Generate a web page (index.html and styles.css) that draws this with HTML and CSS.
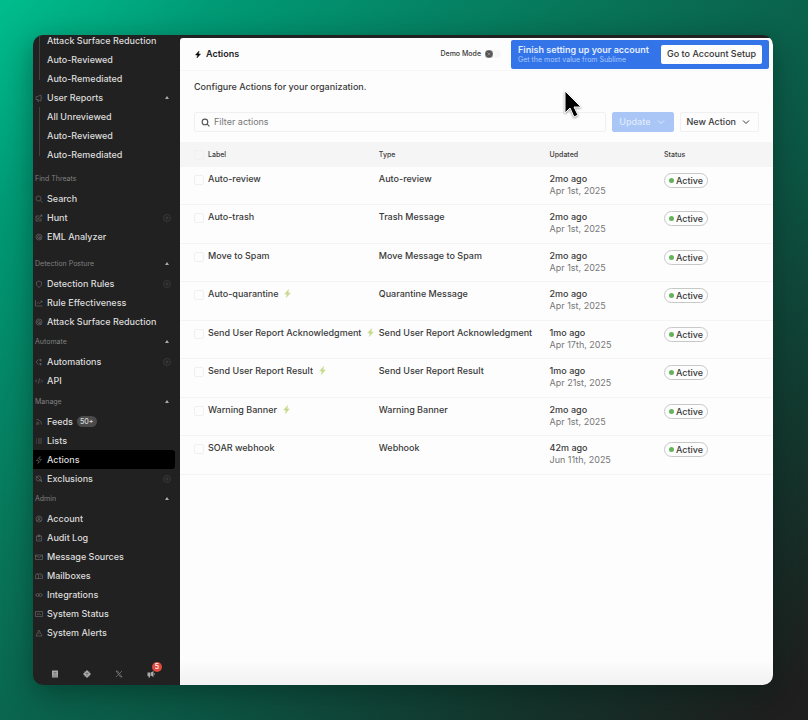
FILE: index.html
```
<!DOCTYPE html>
<html lang="en">
<head>
<meta charset="utf-8">
<title>Actions</title>
<link rel="stylesheet" href="styles.css">
</head>
<body>
<svg class="defs" width="0" height="0" aria-hidden="true">
  <symbol id="i-horn" viewBox="0 0 16 16"><path d="M2 6v5h3l7 3V2L5 5H3a1 1 0 0 0-1 1zM5 11l1 4h2M14 7v2"/></symbol>
  <symbol id="i-search" viewBox="0 0 16 16"><circle cx="7" cy="7" r="5"/><path d="M11 11l4 4"/></symbol>
  <symbol id="i-hunt" viewBox="0 0 16 16"><path d="M2 4h7M2 4v10h10V8M5 11l9-9M10 2h4v4M4 7l5 5"/></symbol>
  <symbol id="i-target" viewBox="0 0 16 16"><circle cx="8" cy="8" r="6"/><circle cx="8" cy="8" r="3"/><path d="M8 8l4 5M8 8h.1"/></symbol>
  <symbol id="i-shield" viewBox="0 0 16 16"><path d="M8 2l5 2v4c0 3-2 5-5 7-3-2-5-4-5-7V4z"/></symbol>
  <symbol id="i-chart" viewBox="0 0 16 16"><path d="M1 2v12h14M4 9l3-2 2 2 5-5M11 4h3v3"/></symbol>
  <symbol id="i-auto" viewBox="0 0 16 16"><path d="M7 3L2 8l5 5M11 2v5M8 4h6M11 10v5M8 12h6"/></symbol>
  <symbol id="i-code" viewBox="0 0 16 16"><path d="M4 5L1 8l3 3M12 5l3 3-3 3M9 3L7 13"/></symbol>
  <symbol id="i-feed" viewBox="0 0 16 16"><path d="M3 8a5 5 0 0 1 5 5M3 3a10 10 0 0 1 10 10"/><circle cx="4" cy="12" r="1"/></symbol>
  <symbol id="i-list" viewBox="0 0 16 16"><path d="M6 4h8M6 8h8M6 12h8M2 4h2M2 8h2M2 12h2"/></symbol>
  <symbol id="i-bolt" viewBox="0 0 16 16"><path d="M10 1L3 9h4l-1 6 7-8H9z"/></symbol>
  <symbol id="i-exclude" viewBox="0 0 16 16"><circle cx="7" cy="7" r="5"/><path d="M3 3l11 11M13 9v5"/></symbol>
  <symbol id="i-gear" viewBox="0 0 16 16"><circle cx="8" cy="8" r="6"/><circle cx="8" cy="7" r="2"/><path d="M4 12c2-3 6-3 8 0"/></symbol>
  <symbol id="i-log" viewBox="0 0 16 16"><path d="M3 4h10v10H3zM6 2h4v3H6zM6 9l2 2 3-3"/></symbol>
  <symbol id="i-mail" viewBox="0 0 16 16"><path d="M1 4h14v9H1zM1 5l7 4 7-4"/></symbol>
  <symbol id="i-box" viewBox="0 0 16 16"><path d="M4 4h8a3 3 0 0 1 3 3v6H1V7a3 3 0 0 1 3-3zM7 13V7a3 3 0 0 0-3-3M10 8h3"/></symbol>
  <symbol id="i-plug" viewBox="0 0 16 16"><circle cx="5" cy="8" r="3"/><circle cx="11" cy="8" r="3"/><path d="M1 8h1M14 8h1"/></symbol>
  <symbol id="i-status" viewBox="0 0 16 16"><path d="M1 3h14v10H1zM5 10V7M8 10V5M11 10V8"/></symbol>
  <symbol id="i-alert" viewBox="0 0 16 16"><path d="M8 2l6 12H2zM8 7v3M8 12h.1"/></symbol>
  <symbol id="i-add" viewBox="0 0 16 16"><circle cx="8" cy="8" r="7"/><path d="M8 4v8M4 8h8"/></symbol>
  <symbol id="i-chevron" viewBox="0 0 16 16"><path d="M2 5l6 6 6-6"/></symbol>
</svg>
<div class="window">
  <aside class="sidebar">
    <nav class="nav">
      <ul class="group tree">
        <li><a href="#">Attack Surface Reduction</a></li>
        <li><a href="#">Auto-Reviewed</a></li>
        <li><a href="#">Auto-Remediated</a></li>
      </ul>
      <ul class="group">
        <li><a href="#"><svg class="icon"><use href="#i-horn"/></svg>User Reports<span class="caret"></span></a></li>
      </ul>
      <ul class="group tree">
        <li><a href="#">All Unreviewed</a></li>
        <li><a href="#">Auto-Reviewed</a></li>
        <li><a href="#">Auto-Remediated</a></li>
      </ul>
      <h2 class="gap-m">Find Threats</h2>
      <ul class="group">
        <li><a href="#"><svg class="icon"><use href="#i-search"/></svg>Search</a></li>
        <li><a href="#"><svg class="icon"><use href="#i-hunt"/></svg>Hunt<svg class="icon add"><use href="#i-add"/></svg></a></li>
        <li><a href="#"><svg class="icon"><use href="#i-target"/></svg>EML Analyzer</a></li>
      </ul>
      <h2 class="gap-l">Detection Posture<span class="caret"></span></h2>
      <ul class="group">
        <li><a href="#"><svg class="icon"><use href="#i-shield"/></svg>Detection Rules<svg class="icon add"><use href="#i-add"/></svg></a></li>
        <li><a href="#"><svg class="icon"><use href="#i-chart"/></svg>Rule Effectiveness</a></li>
        <li><a href="#"><svg class="icon"><use href="#i-target"/></svg>Attack Surface Reduction</a></li>
      </ul>
      <h2>Automate<span class="caret"></span></h2>
      <ul class="group">
        <li><a href="#"><svg class="icon"><use href="#i-auto"/></svg>Automations<svg class="icon add"><use href="#i-add"/></svg></a></li>
        <li><a href="#"><svg class="icon"><use href="#i-code"/></svg>API</a></li>
      </ul>
      <h2 class="gap-s">Manage<span class="caret"></span></h2>
      <ul class="group">
        <li><a href="#"><svg class="icon"><use href="#i-feed"/></svg>Feeds<span class="count">50+</span></a></li>
        <li><a href="#"><svg class="icon"><use href="#i-list"/></svg>Lists</a></li>
        <li><a href="#" class="current" aria-current="page"><svg class="icon"><use href="#i-bolt"/></svg>Actions</a></li>
        <li><a href="#"><svg class="icon"><use href="#i-exclude"/></svg>Exclusions<svg class="icon add"><use href="#i-add"/></svg></a></li>
      </ul>
      <h2>Admin<span class="caret"></span></h2>
      <ul class="group">
        <li><a href="#"><svg class="icon"><use href="#i-gear"/></svg>Account</a></li>
        <li><a href="#"><svg class="icon"><use href="#i-log"/></svg>Audit Log</a></li>
        <li><a href="#"><svg class="icon"><use href="#i-mail"/></svg>Message Sources</a></li>
        <li><a href="#"><svg class="icon"><use href="#i-box"/></svg>Mailboxes</a></li>
        <li><a href="#"><svg class="icon"><use href="#i-plug"/></svg>Integrations</a></li>
        <li><a href="#"><svg class="icon"><use href="#i-status"/></svg>System Status</a></li>
        <li><a href="#"><svg class="icon"><use href="#i-alert"/></svg>System Alerts</a></li>
      </ul>
    </nav>
    <div class="social">
      <a href="#" aria-label="Docs"><svg viewBox="0 0 16 16"><path class="solid" d="M2 1h12v14H2z"/><path class="cut" d="M5 5h6M5 8h6M3 12h10"/></svg></a>
      <a href="#" aria-label="Slack"><svg viewBox="0 0 16 16"><path class="solid" d="M6 1h4v2h3v3h2v4h-2v3h-3v2H6v-2H3v-3H1V6h2V3h3z"/><path class="cut" d="M5 7h6M8 5v6"/></svg></a>
      <a href="#" aria-label="X"><svg viewBox="0 0 16 16"><path class="line" d="M2 2h3l9 12h-3zM14 2L9 7M7 9l-5 5"/></svg></a>
      <a href="#" aria-label="News"><svg viewBox="0 0 16 16"><path class="solid" d="M1 5h6v7H6v3H3v-3H1zM8 5l5-3v12l-5-3zM14 6h1v4h-1z"/></svg><span class="alert">5</span></a>
    </div>
  </aside>
  <main class="main">
    <header class="top">
      <h1><svg class="bolt"><use href="#i-bolt"/></svg>Actions</h1>
      <div class="demo">Demo Mode
        <button class="toggle" type="button" role="switch" aria-checked="false" aria-label="Demo Mode"><svg viewBox="0 0 16 16"><circle cx="8" cy="8" r="8"/><path d="M5 5l6 6M11 5l-6 6"/></svg></button>
      </div>
      <section class="banner">
        <div class="banner-text">
          <strong>Finish setting up your account</strong>
          <span>Get the most value from Sublime</span>
        </div>
        <button type="button">Go to Account Setup</button>
      </section>
    </header>
    <p class="intro">Configure Actions for your organization.</p>
    <div class="tools">
      <label class="filter">
        <svg><use href="#i-search"/></svg>
        <input type="text" placeholder="Filter actions" aria-label="Filter actions">
      </label>
      <button class="btn primary" type="button">Update<svg><use href="#i-chevron"/></svg></button>
      <button class="btn" type="button">New Action<svg><use href="#i-chevron"/></svg></button>
    </div>
    <table>
      <colgroup><col class="c-check"><col class="c-name"><col class="c-name"><col class="c-date"><col></colgroup>
      <thead>
        <tr><th><input type="checkbox" aria-label="Select all"></th><th>Label</th><th>Type</th><th>Updated</th><th>Status</th></tr>
      </thead>
      <tbody>
        <tr><td><input type="checkbox" aria-label="Select Auto-review"></td><td>Auto-review</td><td>Auto-review</td><td>2mo ago<small>Apr 1st, 2025</small></td><td><span class="pill">Active</span></td></tr>
        <tr><td><input type="checkbox" aria-label="Select Auto-trash"></td><td>Auto-trash</td><td>Trash Message</td><td>2mo ago<small>Apr 1st, 2025</small></td><td><span class="pill">Active</span></td></tr>
        <tr><td><input type="checkbox" aria-label="Select Move to Spam"></td><td>Move to Spam</td><td>Move Message to Spam</td><td>2mo ago<small>Apr 1st, 2025</small></td><td><span class="pill">Active</span></td></tr>
        <tr><td><input type="checkbox" aria-label="Select Auto-quarantine"></td><td>Auto-quarantine<svg class="flash"><use href="#i-bolt"/></svg></td><td>Quarantine Message</td><td>2mo ago<small>Apr 1st, 2025</small></td><td><span class="pill">Active</span></td></tr>
        <tr><td><input type="checkbox" aria-label="Select Send User Report Acknowledgment"></td><td>Send User Report Acknowledgment<svg class="flash"><use href="#i-bolt"/></svg></td><td>Send User Report Acknowledgment</td><td>1mo ago<small>Apr 17th, 2025</small></td><td><span class="pill">Active</span></td></tr>
        <tr><td><input type="checkbox" aria-label="Select Send User Report Result"></td><td>Send User Report Result<svg class="flash"><use href="#i-bolt"/></svg></td><td>Send User Report Result</td><td>1mo ago<small>Apr 21st, 2025</small></td><td><span class="pill">Active</span></td></tr>
        <tr><td><input type="checkbox" aria-label="Select Warning Banner"></td><td>Warning Banner<svg class="flash"><use href="#i-bolt"/></svg></td><td>Warning Banner</td><td>2mo ago<small>Apr 1st, 2025</small></td><td><span class="pill">Active</span></td></tr>
        <tr><td><input type="checkbox" aria-label="Select SOAR webhook"></td><td>SOAR webhook</td><td>Webhook</td><td>42m ago<small>Jun 11th, 2025</small></td><td><span class="pill">Active</span></td></tr>
      </tbody>
    </table>
  </main>
</div>
<svg class="cursor" viewBox="0 0 18 28" aria-hidden="true"><path d="M1 1v22l5-5 4 9 4-2-4-8h7z"/></svg>
</body>
</html>
```
FILE: styles.css
```
* { box-sizing: border-box; }

body {
  margin: 0;
  min-height: 100vh;
  padding: 35px 35px 35px 33px;
  display: flex;
  font: 500 9px/12px Inter, "Liberation Sans", sans-serif;
  color: #3a3a3a;
  background: linear-gradient(137deg, #00bd8d 0%, #009a75 14%, #087458 38%, #0c5443 62%, #14352c 81%, #1e1f1e 97%);
}

a { color: inherit; text-decoration: none; }
button, input { font: inherit; color: inherit; margin: 0; }
ul { list-style: none; margin: 0; padding: 0; }
svg { fill: none; stroke: currentColor; flex: none; }
.defs { position: absolute; }

.window {
  flex: 1;
  display: grid;
  grid-template-columns: 147px 1fr;
  border-radius: 10px;
  overflow: hidden;
  background: #212121;
  box-shadow: 0 8px 28px rgba(0, 20, 14, 0.4);
}

/* Sidebar */
.sidebar {
  display: flex;
  flex-direction: column;
  justify-content: space-between;
  color: #dcdcdc;
}
.nav { margin-top: -4px; }
.nav a {
  display: flex;
  align-items: center;
  height: 19px;
  padding-left: 2px;
  margin-right: 5px;
  white-space: nowrap;
}
.nav .current { background: #000; border-radius: 0 3px 3px 0; }
.nav .icon { width: 8px; height: 8px; margin-right: 4px; color: #808080; }
.nav .add { margin: 0 4px 0 auto; color: #505050; }
.tree a { margin-left: 6px; padding-left: 7px; border-left: 1px solid #414141; }
.tree li:last-child a { border-image: linear-gradient(#414141 55%, transparent 55%) 1; }
.nav h2 {
  display: flex;
  align-items: center;
  height: 21px;
  margin: 0;
  padding: 0 5px 0 2px;
  font-size: 7px;
  font-weight: 400;
  color: #808080;
}
.nav .gap-s { margin-top: 1px; }
.nav .gap-m { margin-top: 4px; }
.nav .gap-l { margin-top: 7px; }
.caret {
  margin: 0 6px 0 auto;
  border: 2px solid transparent;
  border-top: 0;
  border-bottom: 3px solid #aaa;
}
.count {
  margin-left: 4px;
  padding: 0 3px;
  border-radius: 6px;
  background: #4a4a4a;
  font-size: 7px;
  line-height: 11px;
}
.social { display: flex; gap: 24px; padding: 0 18px 7px; color: #aaa; }
.social a { position: relative; display: block; width: 8px; height: 8px; }
.social svg { display: block; width: 8px; height: 8px; }
.social .solid { fill: currentColor; stroke: none; }
.social .cut { stroke: #444; stroke-width: 1; }
.alert {
  position: absolute;
  left: 5px;
  top: -8px;
  width: 10px;
  height: 10px;
  border-radius: 50%;
  background: #dc4a40;
  color: #fff;
  font-size: 7px;
  line-height: 10px;
  text-align: center;
}

/* Main area */
.main {
  min-width: 0;
  margin-top: 3px;
  border-radius: 3px 4px 8px 0;
  background: linear-gradient(#fdfdfd calc(100% - 26px), #f0f1f0);
}
.top {
  display: flex;
  align-items: center;
  height: 33px;
  padding: 0 4px 0 14px;
  border-bottom: 1px solid #f6f6f6;
}
.top h1 {
  display: flex;
  align-items: center;
  gap: 4px;
  margin: 0;
  font-size: 9px;
  font-weight: 600;
  color: #222;
}
.bolt { width: 8px; height: 9px; fill: #000; }
.demo { display: flex; align-items: center; gap: 4px; margin-left: auto; font-size: 7px; }
.toggle {
  display: flex;
  width: 16px;
  padding: 0;
  border: 0;
  border-radius: 4px;
  background: #f7f7f7;
}
.toggle svg { width: 8px; height: 8px; fill: #555; stroke: #bbb; }
.banner {
  display: flex;
  align-items: center;
  justify-content: space-between;
  width: 258px;
  height: 29px;
  margin-left: 10px;
  padding: 0 7px;
  border-radius: 2px;
  background: #3374e8;
  color: #e4eeff;
}
.banner-text { display: flex; flex-direction: column; }
.banner strong { font-weight: 600; line-height: 11px; }
.banner span { font-size: 7px; line-height: 10px; font-weight: 400; color: #a9c8fb; }
.banner button {
  height: 19px;
  padding: 0 6px;
  border: 0;
  border-radius: 2px;
  background: #fdfdfd;
  color: #333;
}

.intro { margin: 0; padding: 10px 14px 19px; }
.tools { display: flex; gap: 6px; padding: 0 14px 10px; }
.filter {
  flex: 1;
  display: flex;
  align-items: center;
  gap: 4px;
  height: 20px;
  padding: 0 6px;
  border: 1px solid #f0f0f0;
  border-radius: 2px;
}
.filter svg { width: 9px; height: 9px; stroke-width: 2; color: #555; }
.filter input {
  flex: 1;
  min-width: 0;
  padding: 0;
  border: 0;
  outline: 0;
  background: none;
  font-weight: 400;
}
.filter input::placeholder { color: #777; opacity: 1; }
.btn {
  display: flex;
  align-items: center;
  gap: 6px;
  height: 20px;
  padding: 0 8px 0 6px;
  border: 1px solid #f0f0f0;
  border-radius: 2px;
  background: none;
}
.btn svg { width: 8px; height: 8px; stroke-width: 2; }
.primary { border-color: #a9c6f7; background: #a9c6f7; color: #dfeafd; }

table { width: 100%; table-layout: fixed; border-spacing: 0; }
.c-check { width: 28px; }
.c-name { width: 28.8%; }
.c-date { width: 19.3%; }
th, td { padding: 0; text-align: left; white-space: nowrap; }
th {
  height: 25px;
  background: #f5f5f5;
  font-size: 7px;
  font-weight: 500;
}
td {
  height: 38px;
  padding-top: 6px;
  border-bottom: 1px solid #f4f4f4;
  vertical-align: top;
}
tr:nth-child(even) td { height: 39px; }
th:first-child, td:first-child { padding-left: 14px; }
input[type="checkbox"] {
  appearance: none;
  display: block;
  width: 10px;
  height: 10px;
  border: 1px solid #f0f0f0;
  border-radius: 2px;
}
td input[type="checkbox"] { margin-top: 2px; }
small { display: block; font-size: 9px; font-weight: 400; color: #777; }
.flash {
  width: 9px;
  height: 9px;
  margin-left: 5px;
  vertical-align: -1px;
  fill: #c4d984;
  stroke: #cfdf9f;
}
.pill {
  display: inline-flex;
  align-items: center;
  gap: 2px;
  height: 15px;
  padding: 0 4px;
  border: 1px solid #c6c9c6;
  border-radius: 8px;
}
.pill::before {
  content: "";
  width: 5px;
  height: 5px;
  border-radius: 50%;
  background: #62b35c;
}

.cursor {
  position: absolute;
  left: 564px;
  top: 90px;
  width: 18px;
  height: 28px;
  fill: #000;
  stroke: #fff;
  stroke-width: 1;
  filter: drop-shadow(0 1px 1px rgba(0, 0, 0, 0.4));
}
```
